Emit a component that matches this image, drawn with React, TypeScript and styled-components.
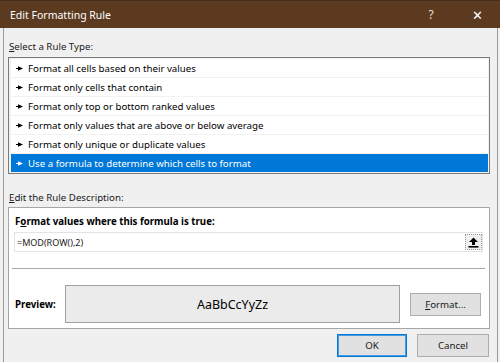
import { createGlobalStyle, styled } from 'styled-components';

const GlobalStyle = createGlobalStyle`
  html, body {
    margin: 0;
    padding: 0;
    background: #f0f0f0;
  }
  body {
    font-family: 'Noto Sans', 'Liberation Sans', sans-serif;
    font-size: 9.7px;
    color: #000;
  }
`;

const RULES = [
  'Format all cells based on their values',
  'Format only cells that contain',
  'Format only top or bottom ranked values',
  'Format only values that are above or below average',
  'Format only unique or duplicate values',
  'Use a formula to determine which cells to format',
];

const Pointer = () => (
  <svg width="7" height="5" viewBox="0 0 7 5">
    <path d="M0 2.5h3" stroke="currentColor" strokeWidth="1" />
    <path d="M2 0.3L7 2.5L2 4.7Z" fill="currentColor" />
  </svg>
);

const UploadIcon = () => (
  <svg width="11" height="11" viewBox="0 0 11 11">
    <path d="M5.5 0.5L10 5H7V8H4V5H1Z" fill="#000" />
    <rect x="0.5" y="9" width="10" height="1.6" fill="#000" />
  </svg>
);

export default function App() {
  const selected = RULES.length - 1;

  return (
    <>
      <GlobalStyle />
      <Window>
        <TitleBar>
          <Title>Edit Formatting Rule</Title>
          <TitleButtons>
            <HelpMark>?</HelpMark>
            <CloseMark>✕</CloseMark>
          </TitleButtons>
        </TitleBar>
        <Body>
          <Label>
            <u>S</u>elect a Rule Type:
          </Label>
          <RuleList>
            {RULES.map((rule, i) => (
              <RuleRow key={rule} $active={i === selected}>
                <Pointer />
                <span>{rule}</span>
              </RuleRow>
            ))}
          </RuleList>
          <Label $top={15}>
            <u>E</u>dit the Rule Description:
          </Label>
          <DescBox>
            <BoldLabel>
              F<u>o</u>rmat values where this formula is true:
            </BoldLabel>
            <FormulaField>
              <FormulaText>=MOD(ROW(),2)</FormulaText>
              <CollapseButton>
                <UploadIcon />
              </CollapseButton>
            </FormulaField>
            <Divider />
            <PreviewRow>
              <PreviewLabel>Preview:</PreviewLabel>
              <PreviewBox>AaBbCcYyZz</PreviewBox>
              <DialogButton $width={71}>
                <u>F</u>ormat...
              </DialogButton>
            </PreviewRow>
          </DescBox>
          <Footer>
            <DialogButton $width={70} $default>
              OK
            </DialogButton>
            <DialogButton $width={72}>Cancel</DialogButton>
          </Footer>
        </Body>
      </Window>
    </>
  );
}

const Window = styled.div`
  width: 500px;
  height: 362px;
  display: flex;
  flex-direction: column;
  overflow: hidden;
  background: #f0f0f0;
`;

const TitleBar = styled.div`
  height: 28px;
  flex-shrink: 0;
  display: flex;
  align-items: center;
  justify-content: space-between;
  background: #5b3a1f;
  border-top: 1px solid #47301b;
  box-sizing: border-box;
  color: #fff;
  padding: 0 0 0 10px;
`;

const Title = styled.div`
  font-size: 10.5px;
`;

const TitleButtons = styled.div`
  display: flex;
  align-items: center;
  height: 100%;
`;

const HelpMark = styled.div`
  width: 46px;
  text-align: center;
  font-size: 12px;
  color: #e8ded4;
`;

const CloseMark = styled.div`
  width: 46px;
  text-align: center;
  font-size: 13px;
  color: #fff;
`;

const Body = styled.div`
  flex: 1;
  margin: 0 2px 0 3px;
  border-left: 1px solid #9a9a9a;
  border-right: 1px solid #9a9a9a;
  padding: 0 7px 0 4px;
  display: flex;
  flex-direction: column;
`;

const Label = styled.div<{ $top?: number }>`
  margin-top: ${({ $top }) => $top ?? 10}px;
  padding-left: 1px;
  height: 17px;
  line-height: 17px;
  color: #1a1a1a;
`;

const RuleList = styled.div`
  margin-top: 2px;
  border: 1px solid #7a7a7a;
  background: #f2f2f2;
  padding: 1px 1px 1px 2px;
  display: flex;
  flex-direction: column;
  gap: 1px;
`;

const RuleRow = styled.div<{ $active: boolean }>`
  height: 18px;
  display: flex;
  align-items: center;
  gap: 5px;
  padding-left: 5px;
  background: ${({ $active }) => ($active ? '#0078d7' : '#fff')};
  color: ${({ $active }) => ($active ? '#fff' : '#000')};
  white-space: nowrap;
`;

const DescBox = styled.div`
  margin-top: 1px;
  height: 122px;
  box-sizing: border-box;
  border: 1px solid #a6a6a6;
  background: #fff;
  padding: 6px 6px 0 5px;
  display: flex;
  flex-direction: column;
`;

const BoldLabel = styled.div`
  font-weight: 700;
  height: 16px;
  line-height: 16px;
  padding-left: 1px;
`;

const FormulaField = styled.div`
  margin-top: 2px;
  height: 18px;
  display: flex;
  align-items: center;
  justify-content: space-between;
  border: 1px solid #e3e3e3;
  padding-left: 2px;
`;

const FormulaText = styled.span`
  color: #1a1a1a;
  font-size: 9px;
`;

const CollapseButton = styled.div`
  width: 17px;
  height: 16px;
  display: flex;
  align-items: center;
  justify-content: center;
  background: #f0f0f0;
  border: 1px dotted #9a9a9a;
  box-sizing: border-box;
`;

const Divider = styled.div`
  margin: 16px -2px 0 -2px;
  border-top: 1px solid #a8a8a8;
`;

const PreviewRow = styled.div`
  margin-top: 16px;
  display: flex;
  align-items: center;
`;

const PreviewLabel = styled.div`
  width: 50px;
  padding-left: 1px;
  font-weight: 700;
`;

const PreviewBox = styled.div`
  width: 335px;
  height: 38px;
  box-sizing: border-box;
  border: 1px solid #a0a0a0;
  background: #ebebeb;
  display: flex;
  align-items: center;
  justify-content: center;
  font-size: 12.5px;
  margin-right: 10px;
`;

const DialogButton = styled.div<{ $width: number; $default?: boolean }>`
  width: ${({ $width }) => $width}px;
  height: 23px;
  box-sizing: border-box;
  display: flex;
  align-items: center;
  justify-content: center;
  background: #e1e1e1;
  border: 1px solid ${({ $default }) => ($default ? '#0078d7' : '#adadad')};
  box-shadow: ${({ $default }) => ($default ? 'inset 0 0 0 1px #4a9be0' : 'none')};
  color: #1a1a1a;
`;

const Footer = styled.div`
  margin-top: 5px;
  display: flex;
  justify-content: flex-end;
  gap: 10px;
  padding-right: 1px;
`;
